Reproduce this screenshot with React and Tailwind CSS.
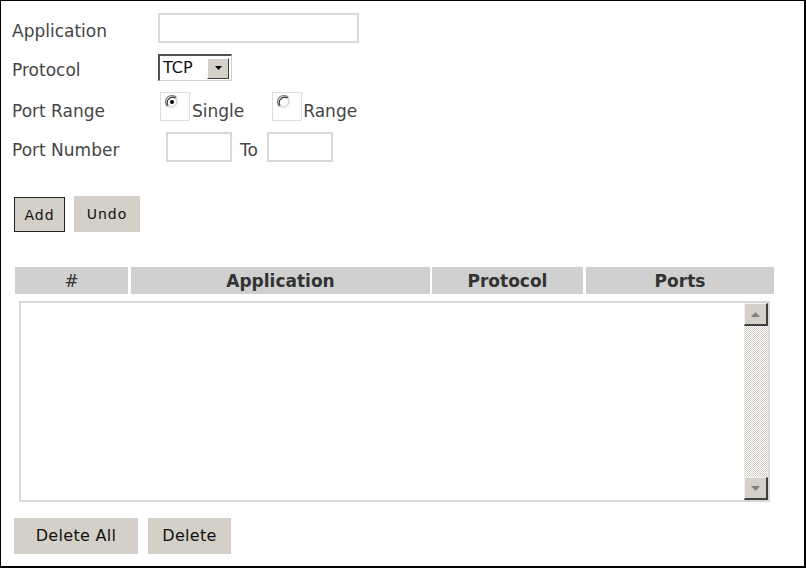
import React from "react";

const font = { fontFamily: '"DejaVu Sans", Verdana, sans-serif' };

function Radio({ checked }) {
  return (
    <svg width="14" height="14" viewBox="0 0 14 14" className="block">
      <circle cx="7" cy="7" r="6" fill="#ffffff" />
      <path d="M11.6 2.4 A6.5 6.5 0 0 0 2.4 11.6" stroke="#808080" strokeWidth="1.2" fill="none" />
      <path d="M10.7 3.3 A5.3 5.3 0 0 0 3.3 10.7" stroke="#303030" strokeWidth="1.2" fill="none" />
      <path d="M2.4 11.6 A6.5 6.5 0 0 0 11.6 2.4" stroke="#f4f4f4" strokeWidth="1.2" fill="none" />
      <path d="M3.3 10.7 A5.3 5.3 0 0 0 10.7 3.3" stroke="#d4d0c8" strokeWidth="1.2" fill="none" />
      {checked && <circle cx="7" cy="7" r="2" fill="#000" />}
    </svg>
  );
}

function ScrollBtn({ up }) {
  return (
    <div className="w-[24px] h-[23px] bg-[#d4d0c8] border-t border-l border-t-[#f0f0f0] border-l-[#f0f0f0] border-r-2 border-b-2 border-r-[#404040] border-b-[#404040] flex items-center justify-center">
      <svg width="9" height="5" viewBox="0 0 9 5">
        {up ? <polygon points="4.5,0 9,5 0,5" fill="#808080" /> : <polygon points="0,0 9,0 4.5,5" fill="#808080" />}
      </svg>
    </div>
  );
}

export default function App() {
  return (
    <div
      className="w-[806px] h-[568px] bg-white border-l border-t border-r-2 border-b-2 border-black pl-[11px] pt-[10px] text-[#454545] text-[17px] leading-[20px] overflow-hidden"
      style={font}
    >
      {/* Application */}
      <div className="h-[39px] flex items-center">
        <div className="w-[146px] shrink-0">Application</div>
        <div className="w-[201px] h-[30px] mb-[5px] border-2 border-[#d8d8d8] bg-white"></div>
      </div>
      {/* Protocol */}
      <div className="h-[40px] flex items-center">
        <div className="w-[146px] shrink-0">Protocol</div>
        <div className="w-[74px] h-[27px] mb-[5px] flex items-center border-t-2 border-l-2 border-t-[#505050] border-l-[#505050] border-b border-r border-b-[#d4d0c8] border-r-[#d4d0c8] bg-white">
          <span className="pl-[3px] text-[#111] text-[16px] leading-[20px] w-[47px]">TCP</span>
          <div className="w-[22px] h-[21px] bg-[#d4d0c8] border-t border-l border-t-white border-l-white border-r border-b border-r-[#404040] border-b-[#404040] flex items-center justify-center">
            <svg width="7" height="4" viewBox="0 0 7 4">
              <polygon points="0,0 7,0 3.5,4" fill="#000" />
            </svg>
          </div>
        </div>
      </div>
      {/* Port Range */}
      <div className="h-[41px] flex items-center">
        <div className="w-[146px] shrink-0">Port Range</div>
        <div className="ml-[2px] w-[30px] h-[29px] mb-[8px] border border-[#dcdcdc] pl-[4px] pt-[2px]">
          <Radio checked />
        </div>
        <span className="ml-[2px]">Single</span>
        <div className="ml-[28px] w-[30px] h-[29px] mb-[8px] border border-[#dcdcdc] pl-[4px] pt-[2px]">
          <Radio />
        </div>
        <span className="ml-[1px]">Range</span>
      </div>
      {/* Port Number */}
      <div className="h-[37px] flex items-center">
        <div className="w-[146px] shrink-0">Port Number</div>
        <div className="ml-[8px] w-[66px] h-[30px] mb-[5px] border-2 border-[#d8d8d8]"></div>
        <span className="ml-[8px]">To</span>
        <div className="ml-[9px] w-[66px] h-[30px] mb-[5px] border-2 border-[#d8d8d8]"></div>
      </div>

      {/* Add / Undo */}
      <div className="mt-[29px] ml-[2px] flex items-start text-[14px] tracking-[1px] text-[#111]">
        <div className="w-[51px] h-[35px] bg-[#d4d0c8] border border-[#222] flex items-center justify-center">Add</div>
        <div className="ml-[9px] -mt-[1px] w-[66px] h-[36px] bg-[#d4d0c8] flex items-center justify-center">Undo</div>
      </div>

      {/* Table header */}
      <div className="mt-[35px] ml-[3px] flex h-[27px] font-bold text-[#333] text-[17px]">
        <div className="w-[113px] bg-[#d0d0d0] flex items-center justify-center font-normal">#</div>
        <div className="ml-[3px] w-[299px] bg-[#d0d0d0] flex items-center justify-center">Application</div>
        <div className="ml-[2px] w-[151px] bg-[#d0d0d0] flex items-center justify-center">Protocol</div>
        <div className="ml-[3px] w-[188px] bg-[#d0d0d0] flex items-center justify-center">Ports</div>
      </div>

      {/* List box */}
      <div className="mt-[7px] ml-[7px] w-[751px] h-[201px] border-2 border-[#d8d8d8] bg-white flex justify-end">
        <div className="w-[24px] h-full flex flex-col bg-[repeating-conic-gradient(#d4d0c8_0_25%,#ffffff_0_50%)] bg-[length:2px_2px]">
          <ScrollBtn up />
          <div className="flex-1"></div>
          <ScrollBtn />
        </div>
      </div>

      {/* Delete buttons */}
      <div className="mt-[16px] ml-[2px] flex text-[16px] text-[#111] tracking-[0.3px]">
        <div className="w-[124px] h-[36px] bg-[#d4d0c8] flex items-center justify-center">Delete All</div>
        <div className="ml-[10px] w-[83px] h-[36px] bg-[#d4d0c8] flex items-center justify-center">Delete</div>
      </div>
    </div>
  );
}
